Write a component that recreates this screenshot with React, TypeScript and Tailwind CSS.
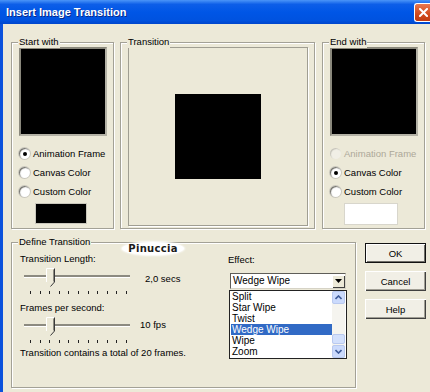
import React from 'react';

const face = 'bg-[#ECE9D8]';
const sans = "font-['Liberation_Sans',Arial,sans-serif]";

const Group = ({ label, className, children }: { label: string; className?: string; children?: React.ReactNode }) => (
  <div className={`relative border border-[#a3a196] shadow-[inset_1px_1px_0_#fff,1px_1px_0_#fff] ${className ?? ''}`}>
    <span className={`absolute -top-[8px] left-[6px] ${face} px-[1px] leading-[13px]`}>{label}</span>
    {children}
  </div>
);

const Radio = ({ label, checked, disabled }: { label: string; checked?: boolean; disabled?: boolean }) => (
  <div className="flex h-[19px] items-center">
    <span
      className={`flex h-[11px] w-[11px] shrink-0 items-center justify-center rounded-full ${
        disabled ? 'bg-[#f1efe6] shadow-[inset_1px_1px_1px_#c4c2b8]' : 'bg-white shadow-[inset_1px_1px_1px_#6e6d66,0_0_0_1px_#c9c7bc]'
      }`}
    >
      {checked && <span className="h-[4px] w-[4px] rounded-full bg-black" />}
    </span>
    <span className={`ml-[3px] whitespace-nowrap ${disabled ? 'text-[#aca899]' : ''}`}>{label}</span>
  </div>
);

const Thumb = () => (
  <svg width="9" height="19" viewBox="0 0 9 19" className="absolute left-[26px] top-[2px]">
    <polygon points="0.5,0.5 8.5,0.5 8.5,14 4.5,18.5 0.5,14" fill="#ECE9D8" />
    <polyline points="0.5,14 0.5,0.5 8.5,0.5" fill="none" stroke="#ffffff" />
    <polyline points="8.5,0.5 8.5,14 4.5,18.5" fill="none" stroke="#3a3a3a" />
    <polyline points="7.5,1.5 7.5,13.5" fill="none" stroke="#8c8a80" />
  </svg>
);

const Slider = () => (
  <div className="relative h-[30px] w-[112px] pt-[9px]">
    <div className="ml-[4px] h-[3px] w-[106px] border-b border-white bg-[#8c8a80]" />
    <div className="ml-[10px] mt-[13px] flex w-[97px] justify-between">
      {Array.from({ length: 11 }).map((_, i) => (
        <span key={i} className="h-[3px] w-[1px] bg-[#222]" />
      ))}
    </div>
    <Thumb />
  </div>
);

const Button = ({ label, primary }: { label: string; primary?: boolean }) => (
  <div
    className={`flex h-[20px] w-[61px] items-center justify-center bg-[#f1efe6] ${
      primary
        ? 'border border-[#111] shadow-[inset_1px_1px_0_#fff,inset_-1px_-1px_0_#6f6e68]'
        : 'shadow-[inset_1px_1px_0_#fff,inset_-1px_-1px_0_#404040,inset_-2px_-2px_0_#a09e94]'
    }`}
  >
    {label}
  </div>
);

const effects = ['Split', 'Star Wipe', 'Twist', 'Wedge Wipe', 'Wipe', 'Zoom'];

const Chevron = ({ up }: { up?: boolean }) => (
  <svg width="7" height="5" viewBox="0 0 7 5">
    <polyline
      points={up ? '0.5,4 3.5,1 6.5,4' : '0.5,1 3.5,4 6.5,1'}
      fill="none"
      stroke="#3d5a99"
      strokeWidth="1.6"
    />
  </svg>
);

export default function App() {
  return (
    <div className={`h-[392px] w-[430px] overflow-hidden ${face} ${sans} text-[9.5px] leading-[13px] text-black`}>
      {/* title bar */}
      <div className="flex h-[24px] items-start bg-[linear-gradient(to_bottom,#4b95f8_0%,#0d5ee8_18%,#0056e6_50%,#0052df_85%,#0046cc_100%)]">
        <span className="ml-[6px] mt-[6px] text-[11px] font-bold leading-[13px] text-white [text-shadow:1px_1px_0_#0a2a8a]">
          Insert Image Transition
        </span>
        <div className="ml-auto mt-[3px] flex h-[19px] w-[16px] items-center justify-center rounded-l-[3px] border border-r-0 border-white bg-[linear-gradient(to_bottom,#e9784f,#d24a1c_60%,#c03c12)]">
          <svg width="9" height="9" viewBox="0 0 9 9" className="ml-[1px]">
            <path d="M1 1 L8 8 M8 1 L1 8" stroke="#fff" strokeWidth="2" strokeLinecap="square" />
          </svg>
        </div>
      </div>

      <div className="flex h-[368px]">
        <div className="w-[3px] bg-[#0b52dc]" />
        <div className="pl-[8px] pt-[18px]">
          {/* top row */}
          <div className="flex">
            <Group label="Start with" className="h-[187px] w-[103px] pl-[7px] pt-[4px]">
              <div className="h-[89px] w-[88px] border-2 border-[#b4b2a6] border-l-[#8a887c] border-t-[#8a887c] bg-black" />
              <div className="mt-[8px]">
                <Radio label="Animation Frame" checked />
                <Radio label="Canvas Color" />
                <Radio label="Custom Color" />
              </div>
              <div className="ml-[16px] mt-[2px] h-[21px] w-[52px] border border-[#c9c7bc] bg-black" />
            </Group>

            <Group label="Transition" className="ml-[6px] h-[187px] w-[195px] pl-[7px] pt-[4px]">
              <div className="flex h-[179px] w-[180px] items-center justify-center border border-[#a09e92] shadow-[1px_1px_0_#fff]">
                <div className="h-[85px] w-[86px] bg-black" />
              </div>
            </Group>

            <Group label="End with" className="ml-[7px] h-[187px] w-[103px] pl-[7px] pt-[4px]">
              <div className="h-[89px] w-[88px] border-2 border-[#b4b2a6] border-l-[#8a887c] border-t-[#8a887c] bg-black" />
              <div className="mt-[8px]">
                <Radio label="Animation Frame" disabled />
                <Radio label="Canvas Color" checked />
                <Radio label="Custom Color" />
              </div>
              <div className="ml-[14px] mt-[2px] h-[22px] w-[54px] border border-[#d8d6cc] bg-white" />
            </Group>
          </div>

          {/* bottom row */}
          <div className="mt-[13px] flex items-start">
            <Group label="Define Transition" className="flex h-[146px] w-[345px]">
              <div className="absolute left-[110px] -top-[1px] flex h-[13px] w-[62px] items-center justify-center rounded-[50%] bg-white shadow-[0_0_2px_1px_rgba(255,255,255,0.9)]">
                <span className="font-['DejaVu_Sans',sans-serif] text-[10px] font-bold leading-[12px] tracking-[0.3px] text-[#1a1a1a]">
                  Pinuccia
                </span>
              </div>

              <div className="w-[216px] pl-[8px] pt-[9px]">
                <div>Transition Length:</div>
                <div className="mt-[1px] flex items-start">
                  <Slider />
                  <span className="ml-[13px] mt-[6px]">2,0 secs</span>
                </div>
                <div className="mt-[5px]">Frames per second:</div>
                <div className="mt-[1px] flex items-start">
                  <Slider />
                  <span className="ml-[8px] mt-[3px]">10 fps</span>
                </div>
                <div className="mt-[1px] whitespace-nowrap">Transition contains a total of 20 frames.</div>
              </div>

              <div className="pt-[10px]">
                <div>Effect:</div>
                <div className="ml-[2px] mt-[7px] flex h-[16px] w-[116px] items-center border border-[#5e5d58] border-b-[#d6d3c6] border-r-[#d6d3c6] bg-white">
                  <span className="ml-[2px] flex-1 text-[10px] leading-[12px]">Wedge Wipe</span>
                  <span className="flex h-[13px] w-[13px] items-center justify-center bg-[#ece9d8] shadow-[inset_1px_1px_0_#fff,inset_-1px_-1px_0_#404040]">
                    <svg width="7" height="4" viewBox="0 0 7 4">
                      <polygon points="0,0 7,0 3.5,4" fill="#000" />
                    </svg>
                  </span>
                </div>
                <div className="ml-[1px] mt-[1px] flex h-[69px] w-[118px] border border-[#222] bg-white">
                  <div className="w-[102px] pl-[1px]">
                    {effects.map((e) => (
                      <div
                        key={e}
                        className={`h-[11px] pl-[1px] text-[10px] leading-[11px] ${e === 'Wedge Wipe' ? 'bg-[#316ac5] text-white' : ''}`}
                      >
                        {e}
                      </div>
                    ))}
                  </div>
                  <div className="flex w-[13px] flex-col bg-[#f5f4ef]">
                    <div className="flex h-[13px] items-center justify-center rounded-[2px] border border-[#b9c9ef] bg-[#cbdafc]">
                      <Chevron up />
                    </div>
                    <div className="flex-1" />
                    <div className="mb-[1px] h-[10px] rounded-[2px] border border-[#b9c9ef] bg-[#d3e0fc]" />
                    <div className="flex h-[13px] items-center justify-center rounded-[2px] border border-[#b9c9ef] bg-[#cbdafc]">
                      <Chevron />
                    </div>
                  </div>
                </div>
              </div>
            </Group>

            <div className="ml-[9px] mt-[1px] flex flex-col gap-[8px]">
              <Button label="OK" primary />
              <Button label="Cancel" />
              <Button label="Help" />
            </div>
          </div>
        </div>
      </div>
    </div>
  );
}
